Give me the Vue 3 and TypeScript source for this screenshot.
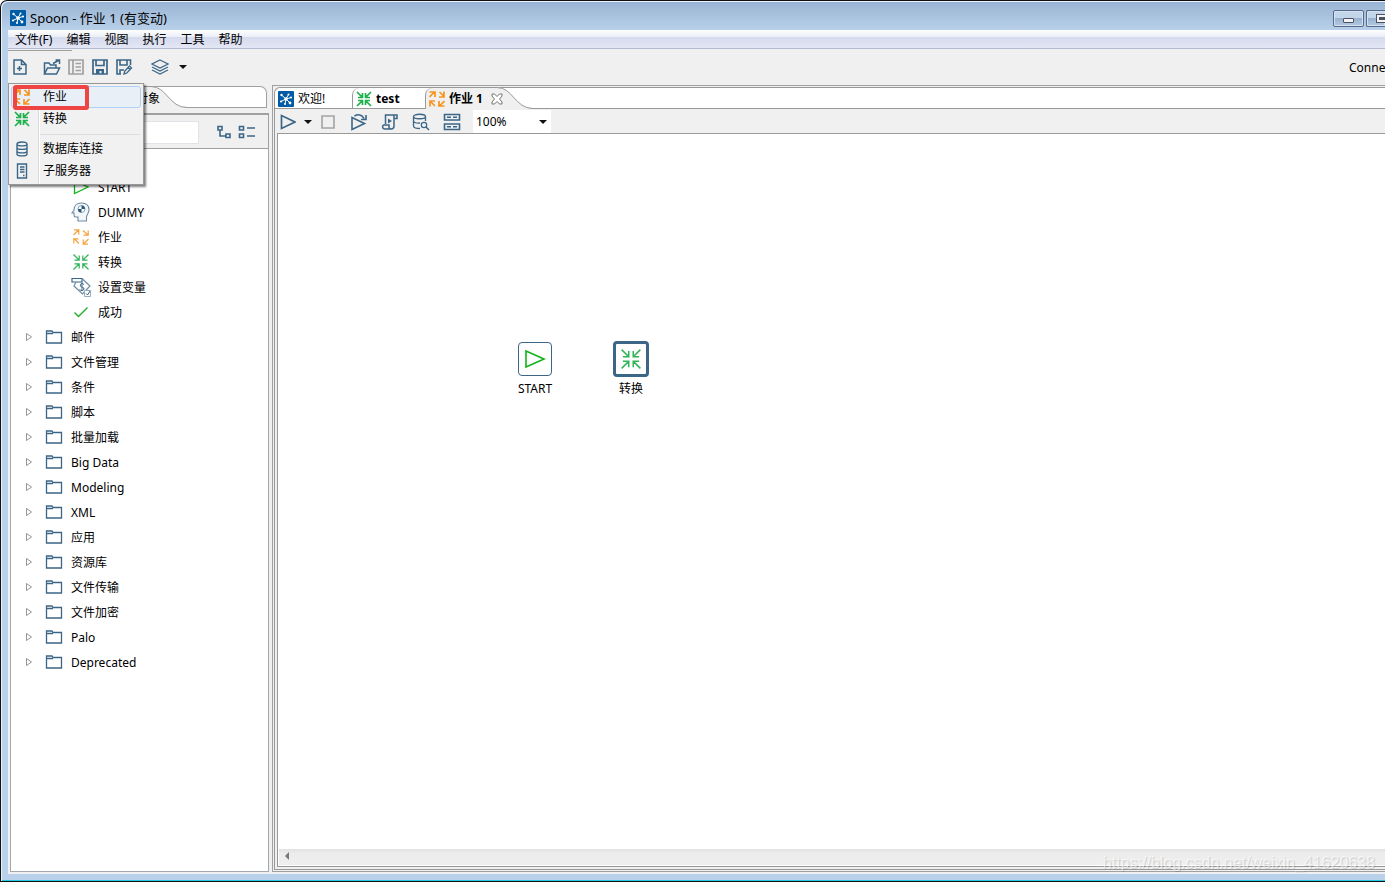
<script setup lang="ts">
import { ref } from 'vue'

interface IconItem {
  icon: string
  label: string
}

const menus: string[] = ['文件(F)', '编辑', '视图', '执行', '工具', '帮助']

const newMenuOpen = ref(true)
const newItems: IconItem[] = [
  { icon: 'job-bold', label: '作业' },
  { icon: 'trans-bold', label: '转换' },
  { icon: 'database', label: '数据库连接' },
  { icon: 'server', label: '子服务器' },
]

const fileTools: IconItem[] = [
  { icon: 'open', label: '打开' },
  { icon: 'explore', label: '浏览' },
  { icon: 'save', label: '保存' },
  { icon: 'save-as', label: '另存为' },
]

const runTools: IconItem[] = [
  { icon: 'replay', label: '重放' },
  { icon: 'script', label: '脚本' },
  { icon: 'db-search', label: '浏览数据库' },
  { icon: 'grid', label: '显示结果' },
]

const entries: IconItem[] = [
  { icon: 'start', label: 'START' },
  { icon: 'dummy', label: 'DUMMY' },
  { icon: 'job', label: '作业' },
  { icon: 'trans', label: '转换' },
  { icon: 'variable', label: '设置变量' },
  { icon: 'success', label: '成功' },
]

const folders: string[] = [
  '邮件', '文件管理', '条件', '脚本', '批量加载', 'Big Data', 'Modeling',
  'XML', '应用', '资源库', '文件传输', '文件加密', 'Palo', 'Deprecated',
]

const filter = ref('')
const zoom = ref('100%')
</script>

<template>
  <svg class="defs" aria-hidden="true">
    <symbol id="logo" viewBox="0 0 16 16">
      <rect width="16" height="16" rx="1" fill="#005ba6" />
      <path d="M8 8 3.500 4M8 8 10.500 3.500M8 8 13 6.500M8 8 12 12M8 8 7 13M8 8 3 10.500" stroke="#fff" stroke-width="1" />
      <g fill="#fff">
        <circle cx="8" cy="8" r="1.800" /><circle cx="3.500" cy="4" r="1.200" /><circle cx="10.500" cy="3.500" r="1" />
        <circle cx="13" cy="6.500" r="1.100" /><circle cx="12" cy="12" r="1.400" /><circle cx="7" cy="13" r="1" /><circle cx="3" cy="10.500" r="1.100" />
      </g>
    </symbol>
    <symbol id="new" viewBox="0 0 16 16">
      <path d="M2 1h7.500L14 5.500V15H2zM9.500 1v4.500H14M5 9.500h5M7.500 7v5" fill="none" stroke="currentColor" stroke-width="1.500" />
    </symbol>
    <symbol id="open" viewBox="0 0 18 16">
      <path d="M1.500 15V4H6l1.500 2H13v3M1.500 15 4.500 9H16.500L13.500 15ZM10 4.500 15.500 1.500M12.500 1h4v4" fill="none" stroke="currentColor" stroke-width="1.500" />
    </symbol>
    <symbol id="explore" viewBox="0 0 16 16">
      <path d="M1 1h14v14H1zM5 1v14M7.500 4.500H13M7.500 8H13M7.500 11.500H13" fill="none" stroke="#a0a0a0" stroke-width="1.700" />
    </symbol>
    <symbol id="save" viewBox="0 0 16 16">
      <path d="M1 1h14v14H1zM4 1v5.500h8V1" fill="none" stroke="currentColor" stroke-width="1.700" />
      <path d="M4 10h8v5H9.500v-3h-2v3H4z" fill="currentColor" />
    </symbol>
    <symbol id="save-as" viewBox="0 0 16 16">
      <path d="M5 15H1V1h13.500v5M4 1v5h7V1M4 15v-4h4" fill="none" stroke="currentColor" stroke-width="1.600" />
      <path d="m8 15 .8-3 4.700-5 2 2-4.700 5zM12 8.500l2 2" fill="none" stroke="currentColor" stroke-width="1.300" />
    </symbol>
    <symbol id="layers" viewBox="0 0 18 16">
      <path d="m9 1 8 4-8 4-8-4zM1 8l8 4 8-4M1 11l8 4 8-4" fill="none" stroke="currentColor" stroke-width="1.200" />
    </symbol>
    <symbol id="caret" viewBox="0 0 8 4"><path d="M0 0h8L4 4z" fill="#111" /></symbol>
    <symbol id="job-bold" viewBox="0 0 16 16">
      <path d="m.5 6 5-5M.5 1h5.500v5M10.500 1l4.500 4.500M15 .5V6h-5M6 15 1 10M1 15.500V10h5M15.500 10l-5 5M10 10v5h5.500" fill="none" stroke="#f7941d" stroke-width="1.700" />
    </symbol>
    <symbol id="trans-bold" viewBox="0 0 16 16">
      <path d="m1 1 5 5M6.500 2v4.500H2M15 1l-5 5M9.500 2v4.500H14M1 15l5-5M6.500 14V9.500H2M15 15l-5-5M9.500 14V9.500H14" fill="none" stroke="#1eb04b" stroke-width="1.700" />
    </symbol>
    <symbol id="job" viewBox="0 0 16 16">
      <path d="m.5 6 5-5M1 .8h4.800V5.500M10 1.500l5 4.500M15.200 1.500V6.200H10.500M6 14.500l-5-5M.8 14.500V9.800H5.500M15.500 10l-5 5M10.200 10.500v4.700H15" fill="none" stroke="#f7a13d" stroke-width="1.200" />
    </symbol>
    <symbol id="trans" viewBox="0 0 16 16">
      <path d="m.5.5 5.500 5.500M6.200 1.500v4.700H1.500M15.500.5 10 6M9.800 1.500v4.700H14.500M.5 15.500 6 10M6.200 14.500V9.800H1.500M15.500 15.500 10 10M9.800 14.500V9.800H14.500" fill="none" stroke="#2fb457" stroke-width="1.200" />
    </symbol>
    <symbol id="database" viewBox="0 0 16 16">
      <path d="M3 3v10c0 2.500 10 2.500 10 0V3c0-2.700-10-2.700-10 0 0 2.500 10 2.500 10 0M3 6.500c0 2.500 10 2.500 10 0M3 10c0 2.500 10 2.500 10 0" fill="none" stroke="currentColor" stroke-width="1.400" />
    </symbol>
    <symbol id="server" viewBox="0 0 16 16">
      <path d="M3.500 1h9v14h-9zM6 4h4.500M6 6.500h4.500M6 9h4.500M9 12.500h1.500" fill="none" stroke="currentColor" stroke-width="1.400" />
    </symbol>
    <symbol id="tree-view" viewBox="0 0 16 14">
      <path d="M2 1.500h4v3.500H2zM10 9h4v3.500h-4zM4 5v6h6" fill="none" stroke="currentColor" stroke-width="1.600" />
    </symbol>
    <symbol id="list-view" viewBox="0 0 18 14">
      <path d="M1.500 1.500h4V5h-4zM1.500 9h4v3.500h-4zM9 3h8M9 11h8" fill="none" stroke="currentColor" stroke-width="1.600" />
    </symbol>
    <symbol id="start" viewBox="0 0 16 16"><path d="M1.500 2v12.500L15 8z" fill="none" stroke="#14b31b" stroke-width="1.300" /></symbol>
    <symbol id="dummy" viewBox="0 0 20 20">
      <path d="M7 19v-4H4.500q-1.500 0-1.500-2v-2H1L3 8C3 3.500 6 1 10.500 1 16 1 18 4.500 18 8c0 3-2.500 5-2.500 7v4z" fill="#f3f7fa" stroke="#6d8ca4" stroke-width="1.100" />
      <circle cx="10.500" cy="7" r="3.500" fill="#fff" stroke="#8aa3b5" />
      <path d="M10.500 7V3.500a3.500 3.500 0 0 1 3.500 3.500zm0 0v3.500A3.500 3.500 0 0 1 7 7z" fill="#2d5878" />
    </symbol>
    <symbol id="variable" viewBox="0 0 20 20">
      <path d="M1 1.500h10v3.500H1z" fill="#fff" stroke="#3b6687" stroke-width="1.200" />
      <path d="M11 1.500 19 9l-7.500 8L3 9l2-4" fill="none" stroke="#6d8ca4" stroke-width="1.200" />
      <path d="M13 7.500C11 5.500 8.500 7 9.500 9s4 1 3.500 3-3 2-4.500.5M11 5.500v8.500" fill="none" stroke="#3b6687" />
      <path d="M13.500 13.500h6v6h-6z" fill="#fff" stroke="#9aacba" /><path d="m15 16.500 1.500 1.500 2.500-4" fill="none" stroke="#3b6687" />
    </symbol>
    <symbol id="success" viewBox="0 0 16 16"><path d="m1.500 8.500 4 4 9-9" fill="none" stroke="#22b029" stroke-width="1.400" /></symbol>
    <symbol id="folder" viewBox="0 0 18 14">
      <path d="M1.500 13V1H7l1 1.500h8.500V13zM1.500 3.500H8" fill="none" stroke="#3b6687" stroke-width="1.300" />
    </symbol>
    <symbol id="chevron" viewBox="0 0 6 8"><path d="M.5.5v7L5.500 4z" fill="#fff" stroke="#888" stroke-width=".9" /></symbol>
    <symbol id="play" viewBox="0 0 16 16"><path d="M1.500 1.500v13L15 8z" fill="none" stroke="currentColor" stroke-width="1.700" /></symbol>
    <symbol id="play-thin" viewBox="0 0 22 22"><path d="M2 3v16L20 11z" fill="none" stroke="currentColor" stroke-width="1.600" /></symbol>
    <symbol id="stop" viewBox="0 0 16 16"><path d="M2 2h12v12H2z" fill="none" stroke="#a3a3a3" stroke-width="1.600" /></symbol>
    <symbol id="replay" viewBox="0 0 18 18">
      <path d="M2 4.500v12L14.500 10.500zM4.500 3C8 .8 12 1.500 14 5.500M16 2v4.500h-5" fill="none" stroke="currentColor" stroke-width="1.600" />
    </symbol>
    <symbol id="script" viewBox="0 0 18 18">
      <path d="M4.500 11V2h11.500v3.500h-3M13 2v11q0 3-3 3H4c-3 0-3-4-1-4h5v2q0 2 2 2" fill="none" stroke="currentColor" stroke-width="1.500" />
      <path d="M7 5.500v5L11 8z" fill="currentColor" />
    </symbol>
    <symbol id="db-search" viewBox="0 0 18 18">
      <path d="M8 15.500c-4 0-6.500-1-6.500-2.500V3.500c0-3 12-3 12 0V8M1.500 3.500c0 3 12 3 12 0M1.500 8c0 1.500 3 2.500 6.500 2" fill="none" stroke="currentColor" stroke-width="1.300" />
      <circle cx="12" cy="12" r="2.700" fill="none" stroke="currentColor" stroke-width="1.200" /><path d="m14 14 3 3" stroke="currentColor" stroke-width="1.500" />
    </symbol>
    <symbol id="grid" viewBox="0 0 18 18">
      <path d="M1.500 1.500h15v5.500h-15zM1.500 11h15v5.500h-15zM4 4.200h4M10 4.200h4M4 13.800h4M10 13.800h4" fill="none" stroke="currentColor" stroke-width="1.600" />
    </symbol>
    <symbol id="close" viewBox="0 0 12 12">
      <path d="M1 1h2.500L6 3.500 8.500 1H11v2L8.500 6 11 9v2H8.500L6 8.500 3.500 11H1V9l2.500-3L1 3z" fill="#fff" stroke="#666" stroke-width=".9" />
    </symbol>
    <symbol id="tab-edge" viewBox="0 0 36 22">
      <path d="M0 .5C16 .5 18 21.500 36 21.500V22H0z" fill="#f0f0f0" /><path d="M0 .5C16 .5 18 21.500 36 21.500" fill="none" stroke="#999" />
    </symbol>
  </svg>

  <div class="window">
    <header class="titlebar">
      <svg class="i16"><use href="#logo" /></svg>
      <h1>Spoon - 作业 1 (有变动)</h1>
      <button class="win-btn" aria-label="最小化"><span class="min-glyph"></span></button>
      <button class="win-btn cut" aria-label="最大化"><span class="max-glyph"></span></button>
    </header>

    <div class="client">
      <nav class="menubar">
        <button v-for="m in menus" :key="m">{{ m }}</button>
      </nav>

      <div class="toolbar">
        <button class="new" aria-label="新建" @click="newMenuOpen = !newMenuOpen"><svg class="i16"><use href="#new" /></svg></button>
        <button v-for="t in fileTools" :key="t.icon" class="tool" :aria-label="t.label"><svg class="i18"><use :href="'#' + t.icon" /></svg></button>
        <button class="layers" aria-label="视图">
          <svg class="i18"><use href="#layers" /></svg><svg class="caret"><use href="#caret" /></svg>
        </button>
        <button class="connect">Conne</button>

        <div v-if="newMenuOpen" class="popup" role="menu">
          <button v-for="n in newItems" :key="n.label" role="menuitem" :class="{ hot: n.icon === 'job-bold', split: n.icon === 'database' }">
            <svg class="i16"><use :href="'#' + n.icon" /></svg><span>{{ n.label }}</span>
          </button>
          <i class="marker"></i>
        </div>
      </div>

      <main class="body">
        <aside class="sidebar">
          <div class="side-tabs">
            <button class="side-tab">核心对象</button>
            <svg class="edge"><use href="#tab-edge" /></svg>
          </div>
          <div class="filter">
            <input v-model="filter" type="text" aria-label="步骤" />
            <button aria-label="展开"><svg class="i16"><use href="#tree-view" /></svg></button>
            <button aria-label="折叠"><svg class="i18"><use href="#list-view" /></svg></button>
          </div>
          <ul class="tree">
            <li v-for="e in entries" :key="e.icon" class="entry"><svg :class="e.icon === 'dummy' || e.icon === 'variable' ? 'i20' : 'i16'"><use :href="'#' + e.icon" /></svg>{{ e.label }}</li>
            <li v-for="f in folders" :key="f" class="folder"><svg class="chev"><use href="#chevron" /></svg><svg class="fold"><use href="#folder" /></svg>{{ f }}</li>
          </ul>
        </aside>

        <section class="editor">
          <div class="editor-inner">
            <div class="tabs">
              <button class="tab welcome"><svg class="i16"><use href="#logo" /></svg>欢迎!</button>
              <button class="tab test"><svg class="i16"><use href="#trans-bold" /></svg>test</button>
              <div class="tab active">
                <svg class="i16"><use href="#job-bold" /></svg>作业 1
                <button aria-label="关闭"><svg class="x"><use href="#close" /></svg></button>
              </div>
              <svg class="edge"><use href="#tab-edge" /></svg>
            </div>
            <div class="run-bar">
              <button class="run" aria-label="运行"><svg class="i16"><use href="#play" /></svg><svg class="caret"><use href="#caret" /></svg></button>
              <button class="stop" aria-label="停止"><svg class="i16"><use href="#stop" /></svg></button>
              <button v-for="t in runTools" :key="t.icon" class="run-tool" :aria-label="t.label"><svg class="i18"><use :href="'#' + t.icon" /></svg></button>
              <div class="zoom">
                <select v-model="zoom" aria-label="缩放"><option>200%</option><option>100%</option><option>50%</option></select>
                <svg class="caret"><use href="#caret" /></svg>
              </div>
            </div>
            <div class="canvas-frame">
              <div class="canvas">
                <figure class="node start-node"><div class="box"><svg class="i22"><use href="#play-thin" /></svg></div><figcaption>START</figcaption></figure>
                <figure class="node trans-node"><div class="box"><svg class="i20"><use href="#trans" /></svg></div><figcaption>转换</figcaption></figure>
              </div>
              <div class="scroll"><button aria-label="向左滚动"></button></div>
            </div>
          </div>
        </section>
      </main>
    </div>
    <div class="watermark">https://blog.csdn.net/weixin_41620638</div>
  </div>
</template>

<style>
html,
body {
  margin: 0;
  overflow: hidden;
}
</style>

<style scoped>
* {
  box-sizing: border-box;
}
.window {
  height: 100vh;
  display: flex;
  flex-direction: column;
  padding: 1px 0 7px 7px;
  background: linear-gradient(#98b3d2, #b9d1ea 30px 120px, #b9d1ea);
  border: 1px solid #111;
  border-right: 0;
  border-top-left-radius: 7px;
  box-shadow: inset 1px 1px #e9f3fc, inset 0 -1px #22c8e4;
  font: 12px/16px "Noto Sans", "Noto Sans CJK SC", sans-serif;
  color: #000;
  position: relative;
  overflow: hidden;
}
.defs {
  position: absolute;
  width: 0;
  height: 0;
}
svg {
  display: block;
  flex: none;
}
button {
  font: inherit;
  color: inherit;
  padding: 0;
  border: 0;
  background: none;
  white-space: nowrap;
}
.i16 { width: 16px; height: 16px; }
.i18 { width: 18px; height: 18px; }
.i20 { width: 20px; height: 20px; }
.i22 { width: 22px; height: 22px; }
.caret { width: 8px; height: 4px; }

.titlebar {
  height: 28px;
  flex: none;
  display: flex;
  align-items: center;
  padding: 4px 0 0 2px;
  gap: 4px;
}
.titlebar h1 {
  font: inherit;
  font-size: 13px;
  margin: 0 auto 0 0;
}
.win-btn {
  width: 31px;
  height: 17px;
  border: 1px solid #56698a;
  border-radius: 2px;
  background: linear-gradient(#c3d5e9 50%, #98b1cd 50%, #b5cbe3);
  box-shadow: inset 0 0 0 1px #d4e2f1;
  display: flex;
  align-items: center;
  justify-content: center;
}
.win-btn.cut {
  width: 19px;
  margin-left: -2px;
  border-right: 0;
  border-radius: 2px 0 0 2px;
  justify-content: flex-end;
}
.min-glyph {
  width: 11px;
  height: 5px;
  margin-top: 4px;
  border: 1px solid #4d5263;
  border-radius: 1px;
  background: #f4f4f4;
}
.max-glyph {
  width: 9px;
  height: 9px;
  border: 1px solid #4d5263;
  border-right: 0;
  background: linear-gradient(#4d5263, #4d5263) 2px 2px / 7px 3px no-repeat #f4f4f4;
}

.client {
  flex: 1;
  min-height: 0;
  display: flex;
  flex-direction: column;
  background: #f0f0f0;
}
.menubar {
  height: 19px;
  flex: none;
  display: flex;
  gap: 14px;
  padding: 2px 0 0 7px;
  border-bottom: 1px solid #b4bbd0;
  background: linear-gradient(#fff, #e9edf6 7px, #d5daed 7px, #e2e6f5);
}
.toolbar {
  height: 36px;
  flex: none;
  display: flex;
  align-items: center;
  color: #3b6687;
  padding-left: 4px;
  position: relative;
}
.toolbar::before {
  content: "";
  position: absolute;
  top: 1px;
  left: 0;
  width: 64px;
  height: 1px;
  background: #a0a0a0;
}
.new { margin-right: 15px; }
.tool { width: 18px; margin-right: 6px; }
.layers {
  display: flex;
  align-items: center;
  gap: 10px;
  margin-left: 12px;
}
.tool .i18 { height: 16px; }
.connect {
  color: #000;
  margin-left: auto;
  width: 36px;
  padding-top: 2px;
  text-align: left;
  overflow: hidden;
}

.popup {
  position: absolute;
  z-index: 5;
  left: 0;
  top: 34px;
  width: 136px;
  padding: 2px;
  border: 1px solid #979797;
  background: linear-gradient(90deg, transparent 29px, #dcdcdc 29px 30px, #fff 30px 31px, transparent 31px) #f1f1f1;
  box-shadow: 2px 2px 2px rgba(0, 0, 0, 0.5);
}
.popup button {
  width: 100%;
  height: 22px;
  display: flex;
  align-items: center;
  gap: 13px;
  padding-left: 2px;
  border: 1px solid transparent;
  border-radius: 3px;
}
.popup span { color: #000; }
.popup .hot {
  border-color: #aecff7;
  background: #e9eff6;
}
.popup .split {
  margin-top: 8px;
  position: relative;
}
.popup .split::before {
  content: "";
  position: absolute;
  left: 28px;
  right: 0;
  top: -5px;
  border-top: 1px solid #dcdcdc;
}
.marker {
  position: absolute;
  left: 4px;
  top: 1px;
  width: 76px;
  height: 25px;
  border: 4px solid #ef4444;
  border-radius: 3px;
}

.body {
  flex: 1;
  min-height: 0;
  display: flex;
  gap: 3px;
  padding: 0 0 2px 2px;
}
.sidebar {
  width: 259px;
  flex: none;
  display: flex;
  flex-direction: column;
}
.side-tabs {
  height: 30px;
  flex: none;
  display: flex;
  align-items: flex-start;
  padding-top: 1px;
  border-bottom: 2px solid #a0a0a0;
  position: relative;
}
.side-tabs::before {
  content: "";
  position: absolute;
  inset: 1px 2px 5px 0;
  border: 1px solid #a0a0a0;
  border-left: 0;
  border-top-right-radius: 7px;
  background: #fff;
}
.side-tab {
  position: relative;
  z-index: 1;
  width: 141px;
  height: 22px;
  padding: 3px 0 0 102px;
  text-align: left;
  background: #f0f0f0;
  border-top: 1px solid #999;
}
.edge {
  width: 36px;
  height: 22px;
  position: relative;
  pointer-events: none;
}
.filter {
  height: 34px;
  flex: none;
  display: flex;
  align-items: center;
  padding: 1px 12px 0 88px;
  border-bottom: 1px solid #a0a0a0;
  border-right: 1px solid #a0a0a0;
  color: #3b6687;
}
.filter input {
  flex: 1;
  min-width: 0;
  height: 23px;
  border: 1px solid #e0e3e8;
  background: #fff;
}
.filter button:first-of-type { margin: 0 6px 0 17px; }
.tree {
  flex: 1;
  margin: 0;
  padding: 26px 0 0;
  list-style: none;
  overflow: hidden;
  background: #fff;
  border: 1px solid #a2a7ad;
  border-top: 0;
}
.tree li {
  height: 25px;
  display: flex;
  align-items: center;
}
.tree svg { margin-bottom: 1px; }
.folder { padding-left: 15px; }
.folder .chev { width: 6px; height: 8px; margin-right: 13px; }
.folder .fold { width: 18px; height: 14px; margin-right: 8px; }
.entry { padding-left: 62px; }
.entry .i16 { margin-right: 9px; }
.entry .i20 { margin-left: -2px; margin-right: 7px; }

.editor {
  flex: 1;
  min-width: 0;
  border: 1px solid #a0a0a0;
  border-right: 0;
  padding: 1px 0 1px 1px;
}
.editor-inner {
  height: 100%;
  display: flex;
  flex-direction: column;
  border: 1px solid #999;
  border-right: 0;
  border-top-left-radius: 6px;
}
.tabs {
  height: 21px;
  flex: none;
  display: flex;
  background: #fff;
  border-bottom: 1px solid #999;
  border-top-left-radius: 6px;
}
.tab {
  height: 20px;
  flex: none;
  display: flex;
  align-items: center;
  gap: 4px;
  padding: 1px 0 0 3px;
  white-space: nowrap;
}
.welcome { width: 77px; }
.test,
.active {
  border-left: 1px solid #999;
  border-top-left-radius: 7px;
  font-weight: 700;
}
.test { width: 73px; }
.active {
  width: 72px;
  height: 21px;
  padding-top: 0;
  background: #f0f0f0;
}
.active button {
  margin-left: 4px;
  position: relative;
  z-index: 1;
}
.x { width: 12px; height: 12px; }
.tabs .edge { margin-top: -1px; }
.run-bar {
  height: 24px;
  flex: none;
  display: flex;
  align-items: center;
  padding: 1px 0 0 5px;
  color: #3b6687;
}
.run {
  display: flex;
  align-items: center;
  gap: 8px;
}
.stop { margin: 0 14px 0 8px; }
.run-tool { margin-right: 13px; }
.zoom {
  width: 78px;
  height: 23px;
  margin-left: -1px;
  display: flex;
  align-items: center;
  background: #fff;
}
.zoom select {
  width: 100%;
  height: 22px;
  padding: 0 3px;
  border: 0;
  appearance: none;
  background: none;
  font: inherit;
  color: #000;
}
.zoom .caret {
  margin-left: -12px;
  margin-right: 4px;
  pointer-events: none;
}
.canvas-frame {
  flex: 1;
  min-height: 0;
  display: flex;
  flex-direction: column;
  margin: 0 0 2px 2px;
  border: 1px solid #999;
  border-right: 0;
  background: #fff;
}
.canvas {
  flex: 1;
  position: relative;
}
.node {
  position: absolute;
  margin: 0;
  width: 60px;
  display: flex;
  flex-direction: column;
  align-items: center;
  gap: 4px;
}
.start-node { left: 227px; top: 207px; }
.trans-node { left: 323px; top: 207px; }
.box {
  width: 36px;
  height: 36px;
  display: flex;
  align-items: center;
  justify-content: center;
  border: 3px solid #3b6687;
  border-radius: 4px;
  color: #14b31b;
}
.start-node .box {
  width: 34px;
  height: 34px;
  margin: 1px;
  border-width: 1px;
}
.scroll {
  height: 16px;
  flex: none;
  margin: 0 0 1px 1px;
  background: linear-gradient(#e2e2e2, #ececec 4px, #efefef);
}
.scroll button {
  display: block;
  margin: 3px 0 0 6px;
  border: 4px solid transparent;
  border-left: 0;
  border-right-color: #777;
}
.watermark {
  position: absolute;
  right: 10px;
  bottom: 8px;
  font: 16px/20px "Liberation Sans", sans-serif;
  color: rgba(255, 255, 255, 0.6);
  text-shadow: 1px 1px 1px rgba(0, 0, 0, 0.15);
  pointer-events: none;
}
</style>
